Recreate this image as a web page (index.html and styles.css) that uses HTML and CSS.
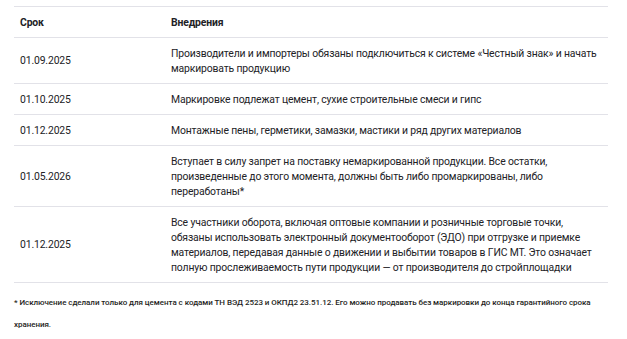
FILE: index.html
```html
<!DOCTYPE html>
<html lang="ru">
<head>
<meta charset="utf-8">
<link rel="stylesheet" href="styles.css">
</head>
<body>
<div class="wrap">
  <table class="tbl">
    <thead>
      <tr><th class="c-date">Срок</th><th>Внедрения</th></tr>
    </thead>
    <tbody>
      <tr><td class="c-date">01.09.2025</td><td>Производители и импортеры обязаны подключиться к системе «Честный знак» и начать маркировать продукцию</td></tr>
      <tr><td class="c-date">01.10.2025</td><td>Маркировке подлежат цемент, сухие строительные смеси и гипс</td></tr>
      <tr><td class="c-date">01.12.2025</td><td>Монтажные пены, герметики, замазки, мастики и ряд других материалов</td></tr>
      <tr><td class="c-date">01.05.2026</td><td>Вступает в силу запрет на поставку немаркированной продукции. Все остатки, произведенные до этого момента, должны быть либо промаркированы, либо переработаны*</td></tr>
      <tr><td class="c-date">01.12.2025</td><td>Все участники оборота, включая оптовые компании и розничные торговые точки, обязаны использовать электронный документооборот (ЭДО) при отгрузке и приемке материалов, передавая данные о движении и выбытии товаров в ГИС МТ. Это означает полную прослеживаемость пути продукции — от производителя до стройплощадки</td></tr>
    </tbody>
  </table>
  <p class="note">* Исключение сделали только для цемента с кодами ТН ВЭД 2523 и ОКПД2 23.51.12. Его можно продавать без маркировки до конца гарантийного срока хранения.</p>
</div>
</body>
</html>
```
FILE: styles.css
```css
html, body {
  margin: 0;
  padding: 0;
  background: #ffffff;
}
.wrap {
  padding: 6px 19px 0 14px;
  font-family: Roboto, "Liberation Sans", Arial, sans-serif;
  color: #222226;
}
.tbl {
  width: 100%;
  border-collapse: collapse;
  border-top: 1px solid #e2e2e8;
  font-size: 10.4px;
  letter-spacing: -0.15px;
  line-height: 15px;
}
.tbl th, .tbl td {
  text-align: left;
  vertical-align: middle;
  padding: 7.5px 6px;
  border-bottom: 1px solid #e2e2e8;
}
.tbl th {
  font-weight: 700;
}
.c-date {
  width: 139px;
}
.note {
  margin: 9px 0 0;
  font-size: 8px;
  letter-spacing: -0.05px;
  line-height: 22px;
  font-weight: 500;
  color: #1e1e22;
}
```
